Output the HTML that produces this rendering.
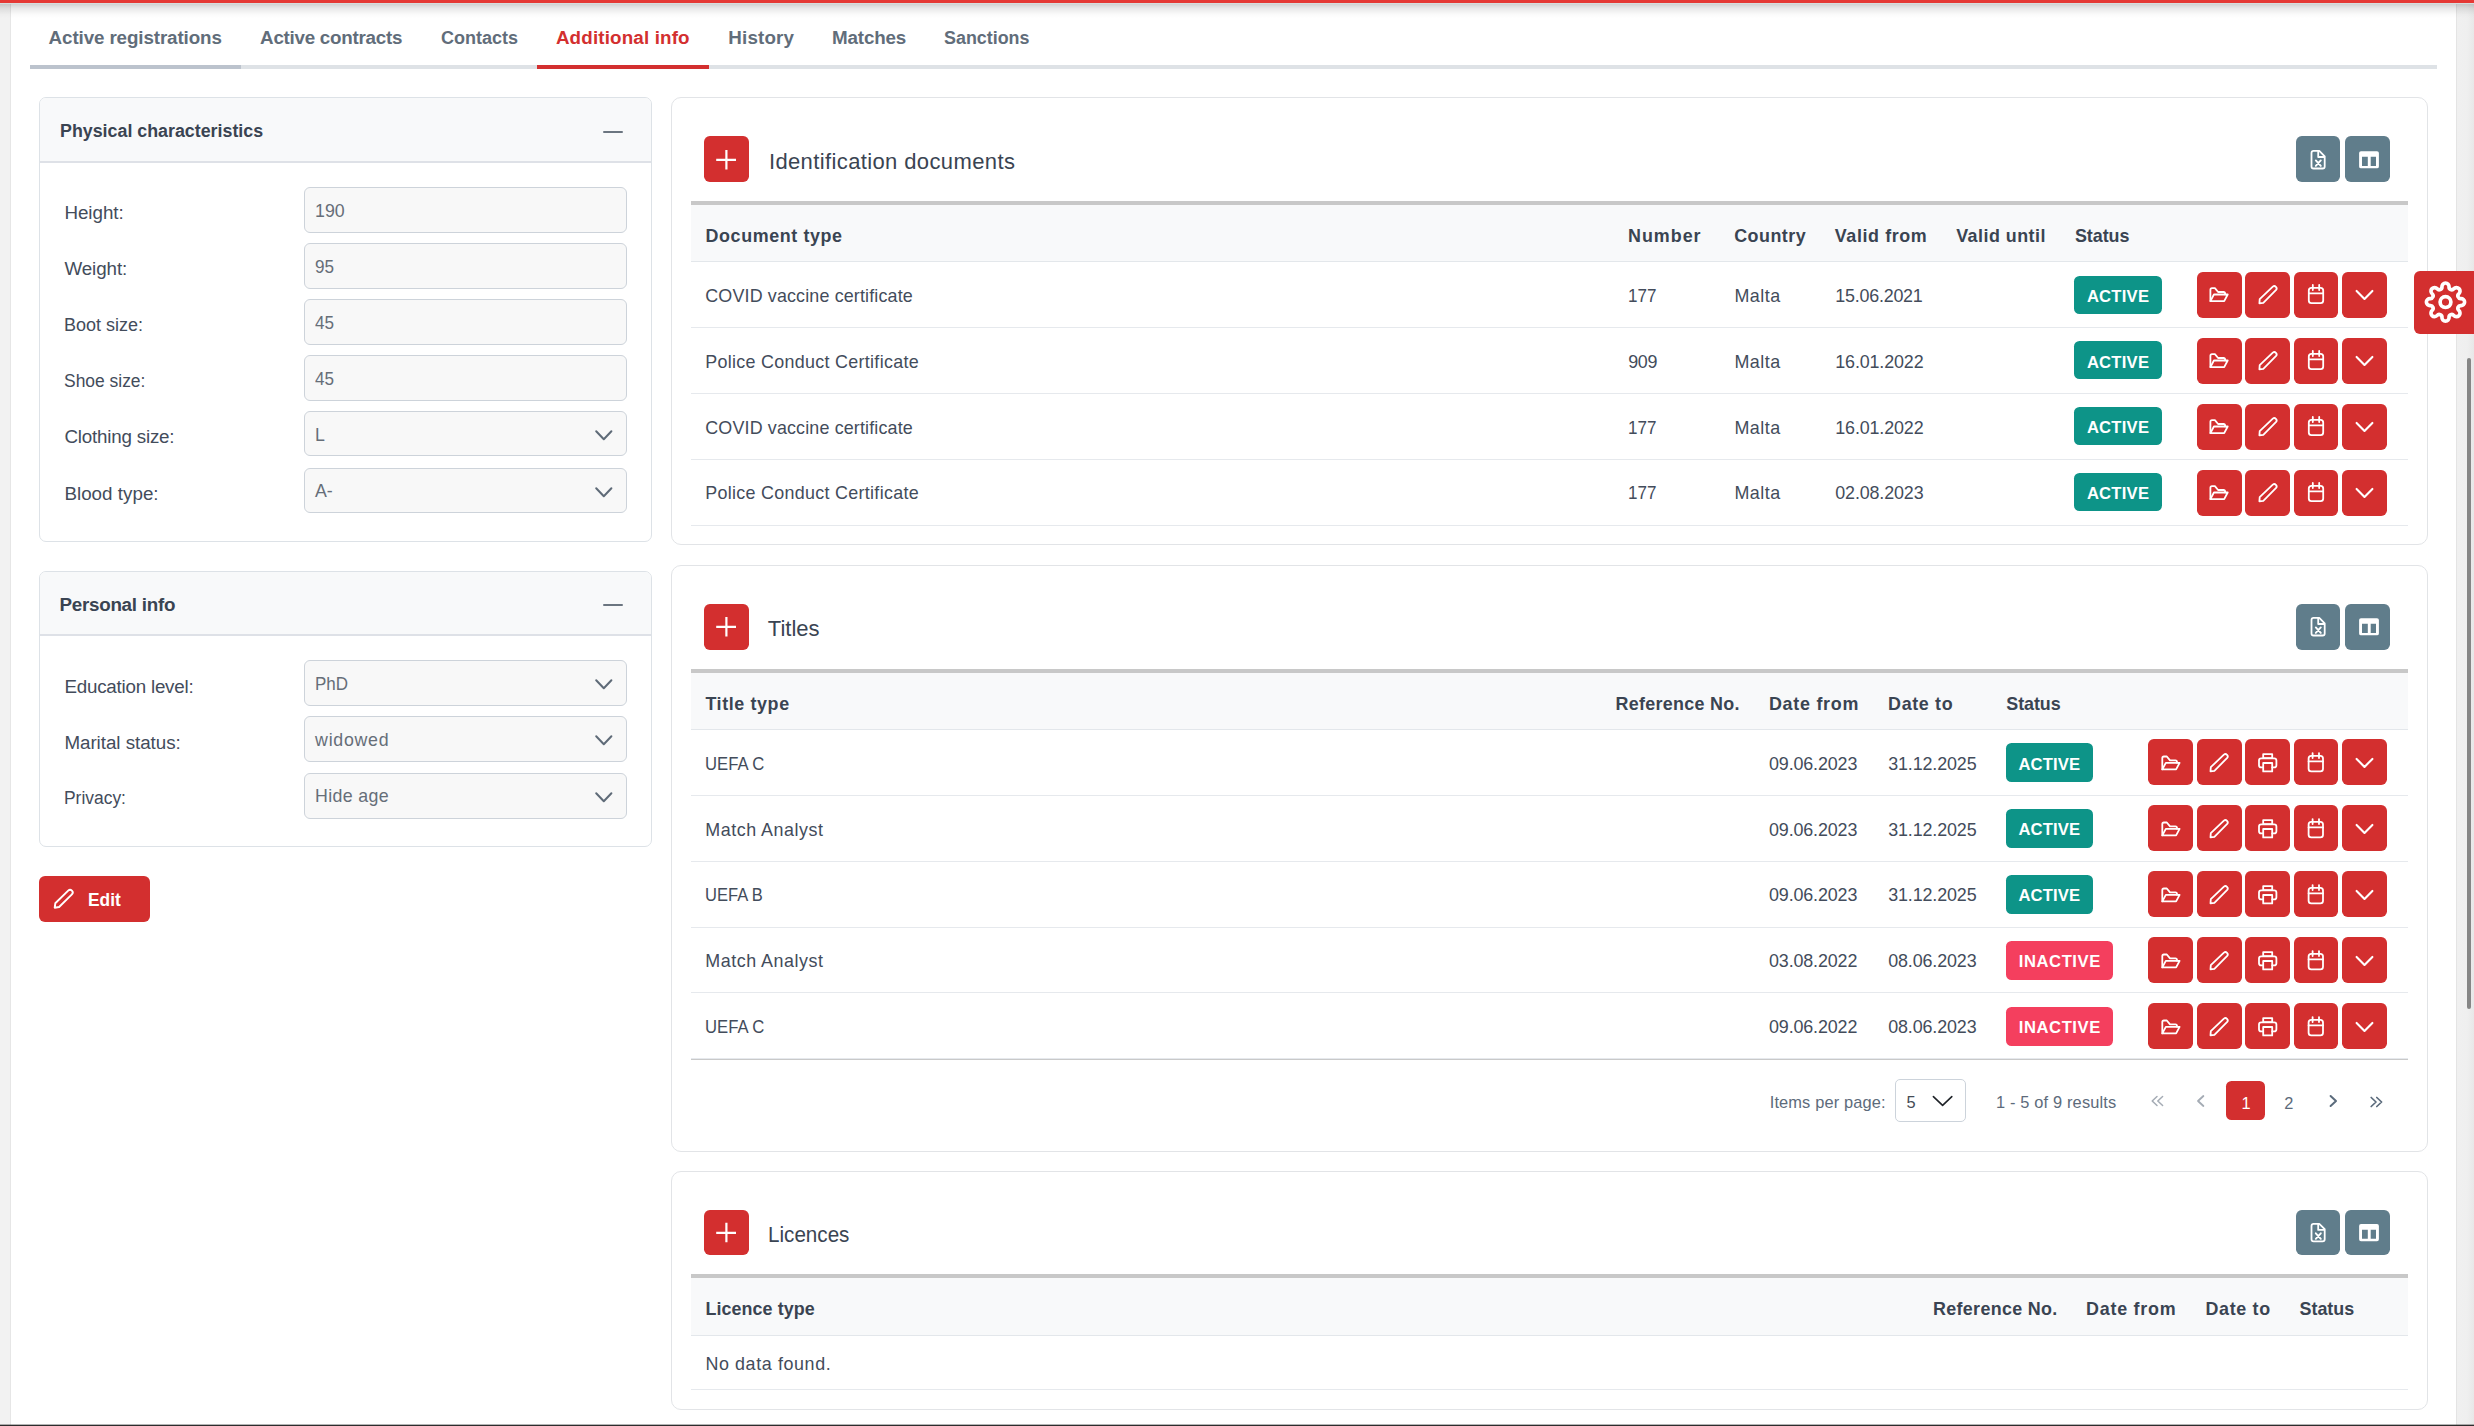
<!DOCTYPE html>
<html lang="en"><head><meta charset="utf-8"><title>Additional info</title>
<style>
html,body{margin:0;padding:0;background:#fff}
body{width:2474px;height:1426px;overflow:hidden;position:relative;font-family:"Liberation Sans",sans-serif}
#root{position:absolute;left:0;top:0;width:2474px;height:1426px;overflow:hidden;background:#fff}
.t{position:absolute;white-space:pre;margin:0;transform-origin:0 0}
.b{position:absolute;overflow:hidden}
</style></head><body><div id="root">
<div style="position:absolute;left:0px;top:0px;width:10px;height:1426px;background:#f2f2f2;border-right:1px solid #e6e6e6"></div>
<div style="position:absolute;left:2456px;top:0px;width:18px;height:1426px;background:linear-gradient(90deg,#e4e4e4 0,#e4e4e4 1px,#f0f0f0 1px,#efefef 11px,#e8e8e8 18px)"></div>
<div style="position:absolute;left:2467px;top:358px;width:4px;height:651px;background:#868686;border-radius:2px"></div>
<div style="position:absolute;left:0px;top:3px;width:2474px;height:15px;background:linear-gradient(180deg,rgba(0,0,0,.20) 0,rgba(0,0,0,.09) 35%,rgba(0,0,0,.02) 75%,rgba(0,0,0,0) 100%)"></div>
<div style="position:absolute;left:0px;top:0px;width:2474px;height:3px;background:#e53935"></div>
<div style="position:absolute;left:0px;top:3px;width:2474px;height:1px;background:#d6dede"></div>
<div style="position:absolute;left:0px;top:1424px;width:2474px;height:1px;background:rgba(40,40,40,.35)"></div>
<div style="position:absolute;left:0px;top:1425px;width:2474px;height:1px;background:#2d2d2d"></div>
<div style="position:absolute;left:30px;top:65px;width:2407px;height:4px;background:#dee2e6"></div>
<div style="position:absolute;left:30px;top:65px;width:211px;height:4px;background:#bcc3cd"></div>
<div style="position:absolute;left:537px;top:65px;width:172px;height:4px;background:#d32f2f"></div>
<span class="t " style="left:48.6px;top:26.2px;font-size:18.8px;line-height:23px;color:#616d7a;font-weight:700;letter-spacing:-0.11px;">Active registrations</span>
<span class="t " style="left:260.1px;top:26.2px;font-size:18.8px;line-height:23px;color:#616d7a;font-weight:700;letter-spacing:-0.26px;">Active contracts</span>
<span class="t " style="left:440.6px;top:26.2px;font-size:18.8px;line-height:23px;color:#616d7a;font-weight:700;transform:scaleX(0.9594);">Contacts</span>
<span class="t " style="left:555.9px;top:26.2px;font-size:18.8px;line-height:23px;color:#d32f2f;font-weight:700;letter-spacing:0.16px;">Additional info</span>
<span class="t " style="left:728.3px;top:26.2px;font-size:18.8px;line-height:23px;color:#616d7a;font-weight:700;letter-spacing:0.16px;">History</span>
<span class="t " style="left:832.0px;top:26.2px;font-size:18.8px;line-height:23px;color:#616d7a;font-weight:700;letter-spacing:-0.15px;">Matches</span>
<span class="t " style="left:944.4px;top:26.2px;font-size:18.8px;line-height:23px;color:#616d7a;font-weight:700;transform:scaleX(0.9526);">Sanctions</span>
<div style="position:absolute;left:39px;top:97px;width:613px;height:444.5px;border:1px solid #dde2e7;border-radius:7px;box-sizing:border-box;background:#fff"></div>
<div style="position:absolute;left:40px;top:98px;width:611px;height:63px;background:#f8f9fa;border-bottom:2px solid #dee1e7;border-radius:6px 6px 0 0"></div>
<span class="t " style="left:59.5px;top:118.6px;font-size:18.8px;line-height:23px;color:#3a4452;font-weight:700;transform:scaleX(0.9490);">Physical characteristics</span>
<div style="position:absolute;left:603px;top:131px;width:20px;height:2px;background:#6b7580;border-radius:1px"></div>
<span class="t " style="left:64.4px;top:200.8px;font-size:18.8px;line-height:23px;color:#434c5b;letter-spacing:-0.02px;">Height:</span>
<div style="position:absolute;left:304px;top:187.3px;width:323px;height:45.4px;box-sizing:border-box;border:1px solid #cdd3da;border-radius:6px;background:#f8f8f8"></div>
<span class="t " style="left:315.0px;top:201.0px;font-size:17.8px;line-height:21px;color:#666e78;letter-spacing:-0.01px;">190</span>
<span class="t " style="left:64.4px;top:256.8px;font-size:18.8px;line-height:23px;color:#434c5b;letter-spacing:-0.08px;">Weight:</span>
<div style="position:absolute;left:304px;top:243.3px;width:323px;height:45.4px;box-sizing:border-box;border:1px solid #cdd3da;border-radius:6px;background:#f8f8f8"></div>
<span class="t " style="left:315.0px;top:257.0px;font-size:17.8px;line-height:21px;color:#666e78;transform:scaleX(0.9616);">95</span>
<span class="t " style="left:64.4px;top:312.8px;font-size:18.8px;line-height:23px;color:#434c5b;transform:scaleX(0.9584);">Boot size:</span>
<div style="position:absolute;left:304px;top:299.3px;width:323px;height:45.4px;box-sizing:border-box;border:1px solid #cdd3da;border-radius:6px;background:#f8f8f8"></div>
<span class="t " style="left:315.0px;top:313.0px;font-size:17.8px;line-height:21px;color:#666e78;transform:scaleX(0.9616);">45</span>
<span class="t " style="left:64.4px;top:368.8px;font-size:18.8px;line-height:23px;color:#434c5b;transform:scaleX(0.9283);">Shoe size:</span>
<div style="position:absolute;left:304px;top:355.3px;width:323px;height:45.4px;box-sizing:border-box;border:1px solid #cdd3da;border-radius:6px;background:#f8f8f8"></div>
<span class="t " style="left:315.0px;top:369.0px;font-size:17.8px;line-height:21px;color:#666e78;transform:scaleX(0.9616);">45</span>
<span class="t " style="left:64.4px;top:424.5px;font-size:18.8px;line-height:23px;color:#434c5b;letter-spacing:-0.20px;">Clothing size:</span>
<div style="position:absolute;left:304px;top:411px;width:323px;height:45.4px;box-sizing:border-box;border:1px solid #cdd3da;border-radius:6px;background:#f8f8f8"></div>
<span class="t " style="left:315.0px;top:424.7px;font-size:17.8px;line-height:21px;color:#666e78;">L</span>
<svg style="position:absolute;left:592px;top:426.0px" width="24" height="18" viewBox="0 0 24 18" fill="none" stroke="#5f6b78" stroke-width="2" stroke-linecap="round" stroke-linejoin="round"><path d="M4.2 5.2l7.6 8 7.6-8"/></svg>
<span class="t " style="left:64.4px;top:481.5px;font-size:18.8px;line-height:23px;color:#434c5b;letter-spacing:0.02px;">Blood type:</span>
<div style="position:absolute;left:304px;top:468.0px;width:323px;height:45.4px;box-sizing:border-box;border:1px solid #cdd3da;border-radius:6px;background:#f8f8f8"></div>
<span class="t " style="left:315.0px;top:481.0px;font-size:17.8px;line-height:21px;color:#666e78;letter-spacing:-0.10px;">A-</span>
<svg style="position:absolute;left:592px;top:483.0px" width="24" height="18" viewBox="0 0 24 18" fill="none" stroke="#5f6b78" stroke-width="2" stroke-linecap="round" stroke-linejoin="round"><path d="M4.2 5.2l7.6 8 7.6-8"/></svg>
<div style="position:absolute;left:39px;top:571px;width:613px;height:275.5px;border:1px solid #dde2e7;border-radius:7px;box-sizing:border-box;background:#fff"></div>
<div style="position:absolute;left:40px;top:572px;width:611px;height:62px;background:#f8f9fa;border-bottom:2px solid #dee1e7;border-radius:6px 6px 0 0"></div>
<span class="t " style="left:59.5px;top:592.6px;font-size:18.8px;line-height:23px;color:#3a4452;font-weight:700;letter-spacing:-0.26px;">Personal info</span>
<div style="position:absolute;left:603px;top:604px;width:20px;height:2px;background:#6b7580;border-radius:1px"></div>
<span class="t " style="left:64.4px;top:674.6px;font-size:18.8px;line-height:23px;color:#434c5b;letter-spacing:-0.22px;">Education level:</span>
<div style="position:absolute;left:304px;top:660.3px;width:323px;height:45.4px;box-sizing:border-box;border:1px solid #cdd3da;border-radius:6px;background:#f8f8f8"></div>
<span class="t " style="left:315.0px;top:674.3px;font-size:17.8px;line-height:21px;color:#666e78;transform:scaleX(0.9561);">PhD</span>
<svg style="position:absolute;left:592px;top:675.3px" width="24" height="18" viewBox="0 0 24 18" fill="none" stroke="#5f6b78" stroke-width="2" stroke-linecap="round" stroke-linejoin="round"><path d="M4.2 5.2l7.6 8 7.6-8"/></svg>
<span class="t " style="left:64.4px;top:730.6px;font-size:18.8px;line-height:23px;color:#434c5b;letter-spacing:-0.04px;">Marital status:</span>
<div style="position:absolute;left:304px;top:716.3px;width:323px;height:45.4px;box-sizing:border-box;border:1px solid #cdd3da;border-radius:6px;background:#f8f8f8"></div>
<span class="t " style="left:315.1px;top:730.4px;font-size:17.8px;line-height:21px;color:#666e78;letter-spacing:0.71px;">widowed</span>
<svg style="position:absolute;left:592px;top:731.3px" width="24" height="18" viewBox="0 0 24 18" fill="none" stroke="#5f6b78" stroke-width="2" stroke-linecap="round" stroke-linejoin="round"><path d="M4.2 5.2l7.6 8 7.6-8"/></svg>
<span class="t " style="left:64.4px;top:786.2px;font-size:18.8px;line-height:23px;color:#434c5b;transform:scaleX(0.9277);">Privacy:</span>
<div style="position:absolute;left:304px;top:773.2px;width:323px;height:45.4px;box-sizing:border-box;border:1px solid #cdd3da;border-radius:6px;background:#f8f8f8"></div>
<span class="t " style="left:315.0px;top:786.3px;font-size:17.8px;line-height:21px;color:#666e78;letter-spacing:0.36px;">Hide age</span>
<svg style="position:absolute;left:592px;top:788.2px" width="24" height="18" viewBox="0 0 24 18" fill="none" stroke="#5f6b78" stroke-width="2" stroke-linecap="round" stroke-linejoin="round"><path d="M4.2 5.2l7.6 8 7.6-8"/></svg>
<div class="b" style="left:39px;top:876px;width:111px;height:46px;background:#d32f2f;border-radius:6px"><svg width="40" height="46" viewBox="0 0 40 46" style="position:absolute;left:0;top:0" fill="none" stroke="#fff" stroke-width="1.9" stroke-linecap="round" stroke-linejoin="round"><path d="M16.3 27.3L29.2 14.6a2.6 2.6 0 0 1 3.7 3.7L20.1 31l-4.4 .7z"/></svg></div>
<span class="t " style="left:88.0px;top:888.4px;font-size:18.8px;line-height:23px;color:#fff;font-weight:700;transform:scaleX(0.9231);">Edit</span>
<div style="position:absolute;left:671px;top:97px;width:1757px;height:448px;border:1px solid #e2e4e7;border-radius:10px;box-sizing:border-box;background:#fff"></div>
<div class="b" style="left:704px;top:136px;width:45px;height:46px;background:#d32f2f;border-radius:5.8px"><svg width="45" height="46" viewBox="0 0 45 46" style="position:absolute;left:0;top:0;" fill="none" stroke="#fff" stroke-width="1.8" stroke-linecap="round" stroke-linejoin="round"><path d="M12.2 23.9h19.8M22.4 13.9v19.5" stroke-width="2.2" stroke-linecap="butt"/></svg></div>
<span class="t " style="left:768.9px;top:148.9px;font-size:22px;line-height:26px;color:#3a4452;letter-spacing:0.38px;">Identification documents</span>
<div class="b" style="left:2296px;top:136px;width:44px;height:46px;background:#607d8b;border-radius:5.8px"><svg width="45" height="46" viewBox="0 0 45 46" style="position:absolute;left:0;top:0;" fill="none" stroke="#fff" stroke-width="1.8" stroke-linecap="round" stroke-linejoin="round"><path d="M23.3 14.9h-5.7a2.1 2.1 0 0 0-2.1 2.1v13.4a2.1 2.1 0 0 0 2.1 2.1h9a2.1 2.1 0 0 0 2.1-2.1V20.3z" stroke-width="1.8"/><path d="M22.2 15.6v5.4h5.8" stroke-width="1.8"/><path d="M19.8 24.4l5 5.5M24.8 24.4l-5 5.5" stroke-width="1.9"/></svg></div>
<div class="b" style="left:2345px;top:136px;width:45px;height:46px;background:#607d8b;border-radius:5.8px"><svg width="45" height="46" viewBox="0 0 45 46" style="position:absolute;left:0;top:0;" fill="none" stroke="#fff" stroke-width="1.8" stroke-linecap="round" stroke-linejoin="round"><path fill="#fff" stroke="none" fill-rule="evenodd" d="M16 15.2h16a1.9 1.9 0 0 1 1.9 1.9v13.3a1.9 1.9 0 0 1-1.9 1.9H16a1.9 1.9 0 0 1-1.9-1.9V17.1a1.9 1.9 0 0 1 1.9-1.9zM17 20.8v9.1h5.8v-9.1zM25.7 20.8v9.1h5.3v-9.1z"/></svg></div>
<div style="position:absolute;left:691px;top:201px;width:1717px;height:4px;background:#c8c8c8"></div>
<div style="position:absolute;left:691px;top:205px;width:1717px;height:56px;background:#f8f9fa;border-bottom:1px solid #e3e7eb"></div>
<span class="t " style="left:705.5px;top:225.7px;font-size:17.9px;line-height:21px;color:#3a4452;font-weight:700;letter-spacing:0.61px;">Document type</span>
<span class="t " style="left:1628.0px;top:225.7px;font-size:17.9px;line-height:21px;color:#3a4452;font-weight:700;letter-spacing:0.99px;">Number</span>
<span class="t " style="left:1734.2px;top:225.7px;font-size:17.9px;line-height:21px;color:#3a4452;font-weight:700;letter-spacing:0.48px;">Country</span>
<span class="t " style="left:1834.8px;top:225.7px;font-size:17.9px;line-height:21px;color:#3a4452;font-weight:700;letter-spacing:0.61px;">Valid from</span>
<span class="t " style="left:1956.2px;top:225.7px;font-size:17.9px;line-height:21px;color:#3a4452;font-weight:700;letter-spacing:0.47px;">Valid until</span>
<span class="t " style="left:2074.9px;top:225.7px;font-size:17.9px;line-height:21px;color:#3a4452;font-weight:700;letter-spacing:-0.02px;">Status</span>
<div style="position:absolute;left:691px;top:327px;width:1717px;height:1px;background:#e6e9ed"></div>
<span class="t " style="left:705.3px;top:285.7px;font-size:17.9px;line-height:21px;color:#434c5b;letter-spacing:0.15px;">COVID vaccine certificate</span>
<span class="t " style="left:1628.3px;top:285.7px;font-size:17.9px;line-height:21px;color:#434c5b;transform:scaleX(0.9534);">177</span>
<span class="t " style="left:1734.4px;top:285.7px;font-size:17.9px;line-height:21px;color:#434c5b;letter-spacing:0.51px;">Malta</span>
<span class="t " style="left:1835.3px;top:285.7px;font-size:17.9px;line-height:21px;color:#434c5b;letter-spacing:-0.23px;">15.06.2021</span>
<div style="position:absolute;left:2074px;top:276px;width:88px;height:38px;background:#0d9488;border-radius:5.5px"></div>
<span class="t " style="left:2086.9px;top:286.6px;font-size:16.6px;line-height:20px;color:#fff;font-weight:700;letter-spacing:0.25px;">ACTIVE</span>
<div class="b" style="left:2197px;top:272px;width:45px;height:46px;background:#d32f2f;border-radius:5.8px"><svg width="45" height="46" viewBox="0 0 45 46" style="position:absolute;left:0;top:0;" fill="none" stroke="#fff" stroke-width="1.8" stroke-linecap="round" stroke-linejoin="round"><path d="M13.4 29V17.8a1.6 1.6 0 0 1 1.6-1.6h2.9l3.2 3.8h5.4a1.6 1.6 0 0 1 1.6 1.6v.8"/><path d="M16.9 22.5h13.8l-3.5 6.6H13.4z"/></svg></div>
<div class="b" style="left:2245px;top:272px;width:45px;height:46px;background:#d32f2f;border-radius:5.8px"><svg width="45" height="46" viewBox="0 0 45 46" style="position:absolute;left:0;top:0;" fill="none" stroke="#fff" stroke-width="1.8" stroke-linecap="round" stroke-linejoin="round"><path d="M14.7 27.2L27.8 14.6a2.35 2.35 0 0 1 3.3 3.3L18.3 30.8l-3.9.5z"/></svg></div>
<div class="b" style="left:2294px;top:272px;width:44px;height:46px;background:#d32f2f;border-radius:5.8px"><svg width="45" height="46" viewBox="0 0 45 46" style="position:absolute;left:0;top:0;" fill="none" stroke="#fff" stroke-width="1.8" stroke-linecap="round" stroke-linejoin="round"><rect x="14.8" y="15.8" width="14.4" height="15.4" rx="2.6"/><path d="M14.8 21.3h14.4M18.8 13v5M25.2 13v5"/></svg></div>
<div class="b" style="left:2342px;top:272px;width:45px;height:46px;background:#d32f2f;border-radius:5.8px"><svg width="45" height="46" viewBox="0 0 45 46" style="position:absolute;left:0;top:0;" fill="none" stroke="#fff" stroke-width="1.8" stroke-linecap="round" stroke-linejoin="round"><path d="M14.6 18.9l7.9 8 7.9-8" stroke-width="2.1"/></svg></div>
<div style="position:absolute;left:691px;top:393px;width:1717px;height:1px;background:#e6e9ed"></div>
<span class="t " style="left:705.3px;top:351.6px;font-size:17.9px;line-height:21px;color:#434c5b;letter-spacing:0.30px;">Police Conduct Certificate</span>
<span class="t " style="left:1628.3px;top:351.6px;font-size:17.9px;line-height:21px;color:#434c5b;letter-spacing:-0.40px;">909</span>
<span class="t " style="left:1734.4px;top:351.6px;font-size:17.9px;line-height:21px;color:#434c5b;letter-spacing:0.51px;">Malta</span>
<span class="t " style="left:1835.3px;top:351.6px;font-size:17.9px;line-height:21px;color:#434c5b;letter-spacing:-0.14px;">16.01.2022</span>
<div style="position:absolute;left:2074px;top:341px;width:88px;height:38px;background:#0d9488;border-radius:5.5px"></div>
<span class="t " style="left:2086.9px;top:352.5px;font-size:16.6px;line-height:20px;color:#fff;font-weight:700;letter-spacing:0.25px;">ACTIVE</span>
<div class="b" style="left:2197px;top:338px;width:45px;height:46px;background:#d32f2f;border-radius:5.8px"><svg width="45" height="46" viewBox="0 0 45 46" style="position:absolute;left:0;top:0;" fill="none" stroke="#fff" stroke-width="1.8" stroke-linecap="round" stroke-linejoin="round"><path d="M13.4 29V17.8a1.6 1.6 0 0 1 1.6-1.6h2.9l3.2 3.8h5.4a1.6 1.6 0 0 1 1.6 1.6v.8"/><path d="M16.9 22.5h13.8l-3.5 6.6H13.4z"/></svg></div>
<div class="b" style="left:2245px;top:338px;width:45px;height:46px;background:#d32f2f;border-radius:5.8px"><svg width="45" height="46" viewBox="0 0 45 46" style="position:absolute;left:0;top:0;" fill="none" stroke="#fff" stroke-width="1.8" stroke-linecap="round" stroke-linejoin="round"><path d="M14.7 27.2L27.8 14.6a2.35 2.35 0 0 1 3.3 3.3L18.3 30.8l-3.9.5z"/></svg></div>
<div class="b" style="left:2294px;top:338px;width:44px;height:46px;background:#d32f2f;border-radius:5.8px"><svg width="45" height="46" viewBox="0 0 45 46" style="position:absolute;left:0;top:0;" fill="none" stroke="#fff" stroke-width="1.8" stroke-linecap="round" stroke-linejoin="round"><rect x="14.8" y="15.8" width="14.4" height="15.4" rx="2.6"/><path d="M14.8 21.3h14.4M18.8 13v5M25.2 13v5"/></svg></div>
<div class="b" style="left:2342px;top:338px;width:45px;height:46px;background:#d32f2f;border-radius:5.8px"><svg width="45" height="46" viewBox="0 0 45 46" style="position:absolute;left:0;top:0;" fill="none" stroke="#fff" stroke-width="1.8" stroke-linecap="round" stroke-linejoin="round"><path d="M14.6 18.9l7.9 8 7.9-8" stroke-width="2.1"/></svg></div>
<div style="position:absolute;left:691px;top:459px;width:1717px;height:1px;background:#e6e9ed"></div>
<span class="t " style="left:705.3px;top:417.5px;font-size:17.9px;line-height:21px;color:#434c5b;letter-spacing:0.15px;">COVID vaccine certificate</span>
<span class="t " style="left:1628.3px;top:417.5px;font-size:17.9px;line-height:21px;color:#434c5b;transform:scaleX(0.9534);">177</span>
<span class="t " style="left:1734.4px;top:417.5px;font-size:17.9px;line-height:21px;color:#434c5b;letter-spacing:0.51px;">Malta</span>
<span class="t " style="left:1835.3px;top:417.5px;font-size:17.9px;line-height:21px;color:#434c5b;letter-spacing:-0.14px;">16.01.2022</span>
<div style="position:absolute;left:2074px;top:407px;width:88px;height:38px;background:#0d9488;border-radius:5.5px"></div>
<span class="t " style="left:2086.9px;top:418.4px;font-size:16.6px;line-height:20px;color:#fff;font-weight:700;letter-spacing:0.25px;">ACTIVE</span>
<div class="b" style="left:2197px;top:404px;width:45px;height:46px;background:#d32f2f;border-radius:5.8px"><svg width="45" height="46" viewBox="0 0 45 46" style="position:absolute;left:0;top:0;" fill="none" stroke="#fff" stroke-width="1.8" stroke-linecap="round" stroke-linejoin="round"><path d="M13.4 29V17.8a1.6 1.6 0 0 1 1.6-1.6h2.9l3.2 3.8h5.4a1.6 1.6 0 0 1 1.6 1.6v.8"/><path d="M16.9 22.5h13.8l-3.5 6.6H13.4z"/></svg></div>
<div class="b" style="left:2245px;top:404px;width:45px;height:46px;background:#d32f2f;border-radius:5.8px"><svg width="45" height="46" viewBox="0 0 45 46" style="position:absolute;left:0;top:0;" fill="none" stroke="#fff" stroke-width="1.8" stroke-linecap="round" stroke-linejoin="round"><path d="M14.7 27.2L27.8 14.6a2.35 2.35 0 0 1 3.3 3.3L18.3 30.8l-3.9.5z"/></svg></div>
<div class="b" style="left:2294px;top:404px;width:44px;height:46px;background:#d32f2f;border-radius:5.8px"><svg width="45" height="46" viewBox="0 0 45 46" style="position:absolute;left:0;top:0;" fill="none" stroke="#fff" stroke-width="1.8" stroke-linecap="round" stroke-linejoin="round"><rect x="14.8" y="15.8" width="14.4" height="15.4" rx="2.6"/><path d="M14.8 21.3h14.4M18.8 13v5M25.2 13v5"/></svg></div>
<div class="b" style="left:2342px;top:404px;width:45px;height:46px;background:#d32f2f;border-radius:5.8px"><svg width="45" height="46" viewBox="0 0 45 46" style="position:absolute;left:0;top:0;" fill="none" stroke="#fff" stroke-width="1.8" stroke-linecap="round" stroke-linejoin="round"><path d="M14.6 18.9l7.9 8 7.9-8" stroke-width="2.1"/></svg></div>
<div style="position:absolute;left:691px;top:525px;width:1717px;height:1px;background:#e6e9ed"></div>
<span class="t " style="left:705.3px;top:483.4px;font-size:17.9px;line-height:21px;color:#434c5b;letter-spacing:0.30px;">Police Conduct Certificate</span>
<span class="t " style="left:1628.3px;top:483.4px;font-size:17.9px;line-height:21px;color:#434c5b;transform:scaleX(0.9534);">177</span>
<span class="t " style="left:1734.4px;top:483.4px;font-size:17.9px;line-height:21px;color:#434c5b;letter-spacing:0.51px;">Malta</span>
<span class="t " style="left:1835.3px;top:483.4px;font-size:17.9px;line-height:21px;color:#434c5b;letter-spacing:-0.14px;">02.08.2023</span>
<div style="position:absolute;left:2074px;top:473px;width:88px;height:38px;background:#0d9488;border-radius:5.5px"></div>
<span class="t " style="left:2086.9px;top:484.3px;font-size:16.6px;line-height:20px;color:#fff;font-weight:700;letter-spacing:0.25px;">ACTIVE</span>
<div class="b" style="left:2197px;top:470px;width:45px;height:46px;background:#d32f2f;border-radius:5.8px"><svg width="45" height="46" viewBox="0 0 45 46" style="position:absolute;left:0;top:0;" fill="none" stroke="#fff" stroke-width="1.8" stroke-linecap="round" stroke-linejoin="round"><path d="M13.4 29V17.8a1.6 1.6 0 0 1 1.6-1.6h2.9l3.2 3.8h5.4a1.6 1.6 0 0 1 1.6 1.6v.8"/><path d="M16.9 22.5h13.8l-3.5 6.6H13.4z"/></svg></div>
<div class="b" style="left:2245px;top:470px;width:45px;height:46px;background:#d32f2f;border-radius:5.8px"><svg width="45" height="46" viewBox="0 0 45 46" style="position:absolute;left:0;top:0;" fill="none" stroke="#fff" stroke-width="1.8" stroke-linecap="round" stroke-linejoin="round"><path d="M14.7 27.2L27.8 14.6a2.35 2.35 0 0 1 3.3 3.3L18.3 30.8l-3.9.5z"/></svg></div>
<div class="b" style="left:2294px;top:470px;width:44px;height:46px;background:#d32f2f;border-radius:5.8px"><svg width="45" height="46" viewBox="0 0 45 46" style="position:absolute;left:0;top:0;" fill="none" stroke="#fff" stroke-width="1.8" stroke-linecap="round" stroke-linejoin="round"><rect x="14.8" y="15.8" width="14.4" height="15.4" rx="2.6"/><path d="M14.8 21.3h14.4M18.8 13v5M25.2 13v5"/></svg></div>
<div class="b" style="left:2342px;top:470px;width:45px;height:46px;background:#d32f2f;border-radius:5.8px"><svg width="45" height="46" viewBox="0 0 45 46" style="position:absolute;left:0;top:0;" fill="none" stroke="#fff" stroke-width="1.8" stroke-linecap="round" stroke-linejoin="round"><path d="M14.6 18.9l7.9 8 7.9-8" stroke-width="2.1"/></svg></div>
<div style="position:absolute;left:671px;top:565px;width:1757px;height:586.5px;border:1px solid #e2e4e7;border-radius:10px;box-sizing:border-box;background:#fff"></div>
<div class="b" style="left:704px;top:604px;width:45px;height:46px;background:#d32f2f;border-radius:5.8px"><svg width="45" height="46" viewBox="0 0 45 46" style="position:absolute;left:0;top:0;transform:translate(0px,-1px);" fill="none" stroke="#fff" stroke-width="1.8" stroke-linecap="round" stroke-linejoin="round"><path d="M12.2 23.9h19.8M22.4 13.9v19.5" stroke-width="2.2" stroke-linecap="butt"/></svg></div>
<span class="t " style="left:767.8px;top:616.0px;font-size:22px;line-height:26px;color:#3a4452;">Titles</span>
<div class="b" style="left:2296px;top:604px;width:44px;height:46px;background:#607d8b;border-radius:5.8px"><svg width="45" height="46" viewBox="0 0 45 46" style="position:absolute;left:0;top:0;transform:translate(0px,-1px);" fill="none" stroke="#fff" stroke-width="1.8" stroke-linecap="round" stroke-linejoin="round"><path d="M23.3 14.9h-5.7a2.1 2.1 0 0 0-2.1 2.1v13.4a2.1 2.1 0 0 0 2.1 2.1h9a2.1 2.1 0 0 0 2.1-2.1V20.3z" stroke-width="1.8"/><path d="M22.2 15.6v5.4h5.8" stroke-width="1.8"/><path d="M19.8 24.4l5 5.5M24.8 24.4l-5 5.5" stroke-width="1.9"/></svg></div>
<div class="b" style="left:2345px;top:604px;width:45px;height:46px;background:#607d8b;border-radius:5.8px"><svg width="45" height="46" viewBox="0 0 45 46" style="position:absolute;left:0;top:0;transform:translate(0px,-1px);" fill="none" stroke="#fff" stroke-width="1.8" stroke-linecap="round" stroke-linejoin="round"><path fill="#fff" stroke="none" fill-rule="evenodd" d="M16 15.2h16a1.9 1.9 0 0 1 1.9 1.9v13.3a1.9 1.9 0 0 1-1.9 1.9H16a1.9 1.9 0 0 1-1.9-1.9V17.1a1.9 1.9 0 0 1 1.9-1.9zM17 20.8v9.1h5.8v-9.1zM25.7 20.8v9.1h5.3v-9.1z"/></svg></div>
<div style="position:absolute;left:691px;top:669px;width:1717px;height:4px;background:#c8c8c8"></div>
<div style="position:absolute;left:691px;top:673px;width:1717px;height:56px;background:#f8f9fa;border-bottom:1px solid #e3e7eb"></div>
<span class="t " style="left:705.4px;top:694.0px;font-size:17.9px;line-height:21px;color:#3a4452;font-weight:700;letter-spacing:0.61px;">Title type</span>
<span class="t " style="left:1615.5px;top:694.0px;font-size:17.9px;line-height:21px;color:#3a4452;font-weight:700;letter-spacing:0.30px;">Reference No.</span>
<span class="t " style="left:1768.9px;top:694.0px;font-size:17.9px;line-height:21px;color:#3a4452;font-weight:700;letter-spacing:0.75px;">Date from</span>
<span class="t " style="left:1888.1px;top:694.0px;font-size:17.9px;line-height:21px;color:#3a4452;font-weight:700;letter-spacing:0.65px;">Date to</span>
<span class="t " style="left:2006.3px;top:694.0px;font-size:17.9px;line-height:21px;color:#3a4452;font-weight:700;letter-spacing:-0.06px;">Status</span>
<div style="position:absolute;left:691px;top:795px;width:1717px;height:1px;background:#e6e9ed"></div>
<span class="t " style="left:705.3px;top:753.6px;font-size:17.9px;line-height:21px;color:#434c5b;transform:scaleX(0.9319);">UEFA C</span>
<span class="t " style="left:1769.0px;top:753.6px;font-size:17.9px;line-height:21px;color:#434c5b;letter-spacing:-0.13px;">09.06.2023</span>
<span class="t " style="left:1888.2px;top:753.6px;font-size:17.9px;line-height:21px;color:#434c5b;letter-spacing:-0.12px;">31.12.2025</span>
<div style="position:absolute;left:2006px;top:743px;width:87px;height:39px;background:#0d9488;border-radius:5.5px"></div>
<span class="t " style="left:2018.4px;top:754.5px;font-size:16.6px;line-height:20px;color:#fff;font-weight:700;letter-spacing:0.15px;">ACTIVE</span>
<div class="b" style="left:2148px;top:739px;width:45px;height:46px;background:#d32f2f;border-radius:5.8px"><svg width="45" height="46" viewBox="0 0 45 46" style="position:absolute;left:0;top:0;transform:translate(0.9px,1.3px);" fill="none" stroke="#fff" stroke-width="1.8" stroke-linecap="round" stroke-linejoin="round"><path d="M13.4 29V17.8a1.6 1.6 0 0 1 1.6-1.6h2.9l3.2 3.8h5.4a1.6 1.6 0 0 1 1.6 1.6v.8"/><path d="M16.9 22.5h13.8l-3.5 6.6H13.4z"/></svg></div>
<div class="b" style="left:2197px;top:739px;width:45px;height:46px;background:#d32f2f;border-radius:5.8px"><svg width="45" height="46" viewBox="0 0 45 46" style="position:absolute;left:0;top:0;transform:translate(-0.9px,1px);" fill="none" stroke="#fff" stroke-width="1.8" stroke-linecap="round" stroke-linejoin="round"><path d="M14.7 27.2L27.8 14.6a2.35 2.35 0 0 1 3.3 3.3L18.3 30.8l-3.9.5z"/></svg></div>
<div class="b" style="left:2245px;top:739px;width:45px;height:46px;background:#d32f2f;border-radius:5.8px"><svg width="45" height="46" viewBox="0 0 45 46" style="position:absolute;left:0;top:0;" fill="none" stroke="#fff" stroke-width="1.8" stroke-linecap="round" stroke-linejoin="round"><rect x="18.2" y="15.1" width="9" height="4"/><path d="M18.2 28.4h-2a2.2 2.2 0 0 1-2.2-2.2v-4.7a2.2 2.2 0 0 1 2.2-2.2h13a2.2 2.2 0 0 1 2.2 2.2v4.7a2.2 2.2 0 0 1-2.2 2.2h-2"/><rect x="18.2" y="24" width="9" height="8.4"/></svg></div>
<div class="b" style="left:2294px;top:739px;width:44px;height:46px;background:#d32f2f;border-radius:5.8px"><svg width="45" height="46" viewBox="0 0 45 46" style="position:absolute;left:0;top:0;transform:translate(-0.2px,1.1px);" fill="none" stroke="#fff" stroke-width="1.8" stroke-linecap="round" stroke-linejoin="round"><rect x="14.8" y="15.8" width="14.4" height="15.4" rx="2.6"/><path d="M14.8 21.3h14.4M18.8 13v5M25.2 13v5"/></svg></div>
<div class="b" style="left:2342px;top:739px;width:45px;height:46px;background:#d32f2f;border-radius:5.8px"><svg width="45" height="46" viewBox="0 0 45 46" style="position:absolute;left:0;top:0;transform:translate(0px,1px);" fill="none" stroke="#fff" stroke-width="1.8" stroke-linecap="round" stroke-linejoin="round"><path d="M14.6 18.9l7.9 8 7.9-8" stroke-width="2.1"/></svg></div>
<div style="position:absolute;left:691px;top:861px;width:1717px;height:1px;background:#e6e9ed"></div>
<span class="t " style="left:705.3px;top:819.5px;font-size:17.9px;line-height:21px;color:#434c5b;letter-spacing:0.52px;">Match Analyst</span>
<span class="t " style="left:1769.0px;top:819.5px;font-size:17.9px;line-height:21px;color:#434c5b;letter-spacing:-0.13px;">09.06.2023</span>
<span class="t " style="left:1888.2px;top:819.5px;font-size:17.9px;line-height:21px;color:#434c5b;letter-spacing:-0.12px;">31.12.2025</span>
<div style="position:absolute;left:2006px;top:809px;width:87px;height:39px;background:#0d9488;border-radius:5.5px"></div>
<span class="t " style="left:2018.4px;top:820.4px;font-size:16.6px;line-height:20px;color:#fff;font-weight:700;letter-spacing:0.15px;">ACTIVE</span>
<div class="b" style="left:2148px;top:805px;width:45px;height:46px;background:#d32f2f;border-radius:5.8px"><svg width="45" height="46" viewBox="0 0 45 46" style="position:absolute;left:0;top:0;transform:translate(0.9px,1.3px);" fill="none" stroke="#fff" stroke-width="1.8" stroke-linecap="round" stroke-linejoin="round"><path d="M13.4 29V17.8a1.6 1.6 0 0 1 1.6-1.6h2.9l3.2 3.8h5.4a1.6 1.6 0 0 1 1.6 1.6v.8"/><path d="M16.9 22.5h13.8l-3.5 6.6H13.4z"/></svg></div>
<div class="b" style="left:2197px;top:805px;width:45px;height:46px;background:#d32f2f;border-radius:5.8px"><svg width="45" height="46" viewBox="0 0 45 46" style="position:absolute;left:0;top:0;transform:translate(-0.9px,1px);" fill="none" stroke="#fff" stroke-width="1.8" stroke-linecap="round" stroke-linejoin="round"><path d="M14.7 27.2L27.8 14.6a2.35 2.35 0 0 1 3.3 3.3L18.3 30.8l-3.9.5z"/></svg></div>
<div class="b" style="left:2245px;top:805px;width:45px;height:46px;background:#d32f2f;border-radius:5.8px"><svg width="45" height="46" viewBox="0 0 45 46" style="position:absolute;left:0;top:0;" fill="none" stroke="#fff" stroke-width="1.8" stroke-linecap="round" stroke-linejoin="round"><rect x="18.2" y="15.1" width="9" height="4"/><path d="M18.2 28.4h-2a2.2 2.2 0 0 1-2.2-2.2v-4.7a2.2 2.2 0 0 1 2.2-2.2h13a2.2 2.2 0 0 1 2.2 2.2v4.7a2.2 2.2 0 0 1-2.2 2.2h-2"/><rect x="18.2" y="24" width="9" height="8.4"/></svg></div>
<div class="b" style="left:2294px;top:805px;width:44px;height:46px;background:#d32f2f;border-radius:5.8px"><svg width="45" height="46" viewBox="0 0 45 46" style="position:absolute;left:0;top:0;transform:translate(-0.2px,1.1px);" fill="none" stroke="#fff" stroke-width="1.8" stroke-linecap="round" stroke-linejoin="round"><rect x="14.8" y="15.8" width="14.4" height="15.4" rx="2.6"/><path d="M14.8 21.3h14.4M18.8 13v5M25.2 13v5"/></svg></div>
<div class="b" style="left:2342px;top:805px;width:45px;height:46px;background:#d32f2f;border-radius:5.8px"><svg width="45" height="46" viewBox="0 0 45 46" style="position:absolute;left:0;top:0;transform:translate(0px,1px);" fill="none" stroke="#fff" stroke-width="1.8" stroke-linecap="round" stroke-linejoin="round"><path d="M14.6 18.9l7.9 8 7.9-8" stroke-width="2.1"/></svg></div>
<div style="position:absolute;left:691px;top:927px;width:1717px;height:1px;background:#e6e9ed"></div>
<span class="t " style="left:705.3px;top:885.4px;font-size:17.9px;line-height:21px;color:#434c5b;transform:scaleX(0.9242);">UEFA B</span>
<span class="t " style="left:1769.0px;top:885.4px;font-size:17.9px;line-height:21px;color:#434c5b;letter-spacing:-0.13px;">09.06.2023</span>
<span class="t " style="left:1888.2px;top:885.4px;font-size:17.9px;line-height:21px;color:#434c5b;letter-spacing:-0.12px;">31.12.2025</span>
<div style="position:absolute;left:2006px;top:875px;width:87px;height:39px;background:#0d9488;border-radius:5.5px"></div>
<span class="t " style="left:2018.4px;top:886.3px;font-size:16.6px;line-height:20px;color:#fff;font-weight:700;letter-spacing:0.15px;">ACTIVE</span>
<div class="b" style="left:2148px;top:871px;width:45px;height:46px;background:#d32f2f;border-radius:5.8px"><svg width="45" height="46" viewBox="0 0 45 46" style="position:absolute;left:0;top:0;transform:translate(0.9px,1.3px);" fill="none" stroke="#fff" stroke-width="1.8" stroke-linecap="round" stroke-linejoin="round"><path d="M13.4 29V17.8a1.6 1.6 0 0 1 1.6-1.6h2.9l3.2 3.8h5.4a1.6 1.6 0 0 1 1.6 1.6v.8"/><path d="M16.9 22.5h13.8l-3.5 6.6H13.4z"/></svg></div>
<div class="b" style="left:2197px;top:871px;width:45px;height:46px;background:#d32f2f;border-radius:5.8px"><svg width="45" height="46" viewBox="0 0 45 46" style="position:absolute;left:0;top:0;transform:translate(-0.9px,1px);" fill="none" stroke="#fff" stroke-width="1.8" stroke-linecap="round" stroke-linejoin="round"><path d="M14.7 27.2L27.8 14.6a2.35 2.35 0 0 1 3.3 3.3L18.3 30.8l-3.9.5z"/></svg></div>
<div class="b" style="left:2245px;top:871px;width:45px;height:46px;background:#d32f2f;border-radius:5.8px"><svg width="45" height="46" viewBox="0 0 45 46" style="position:absolute;left:0;top:0;" fill="none" stroke="#fff" stroke-width="1.8" stroke-linecap="round" stroke-linejoin="round"><rect x="18.2" y="15.1" width="9" height="4"/><path d="M18.2 28.4h-2a2.2 2.2 0 0 1-2.2-2.2v-4.7a2.2 2.2 0 0 1 2.2-2.2h13a2.2 2.2 0 0 1 2.2 2.2v4.7a2.2 2.2 0 0 1-2.2 2.2h-2"/><rect x="18.2" y="24" width="9" height="8.4"/></svg></div>
<div class="b" style="left:2294px;top:871px;width:44px;height:46px;background:#d32f2f;border-radius:5.8px"><svg width="45" height="46" viewBox="0 0 45 46" style="position:absolute;left:0;top:0;transform:translate(-0.2px,1.1px);" fill="none" stroke="#fff" stroke-width="1.8" stroke-linecap="round" stroke-linejoin="round"><rect x="14.8" y="15.8" width="14.4" height="15.4" rx="2.6"/><path d="M14.8 21.3h14.4M18.8 13v5M25.2 13v5"/></svg></div>
<div class="b" style="left:2342px;top:871px;width:45px;height:46px;background:#d32f2f;border-radius:5.8px"><svg width="45" height="46" viewBox="0 0 45 46" style="position:absolute;left:0;top:0;transform:translate(0px,1px);" fill="none" stroke="#fff" stroke-width="1.8" stroke-linecap="round" stroke-linejoin="round"><path d="M14.6 18.9l7.9 8 7.9-8" stroke-width="2.1"/></svg></div>
<div style="position:absolute;left:691px;top:992px;width:1717px;height:1px;background:#e6e9ed"></div>
<span class="t " style="left:705.3px;top:951.3px;font-size:17.9px;line-height:21px;color:#434c5b;letter-spacing:0.52px;">Match Analyst</span>
<span class="t " style="left:1769.0px;top:951.3px;font-size:17.9px;line-height:21px;color:#434c5b;letter-spacing:-0.13px;">03.08.2022</span>
<span class="t " style="left:1888.2px;top:951.3px;font-size:17.9px;line-height:21px;color:#434c5b;letter-spacing:-0.12px;">08.06.2023</span>
<div style="position:absolute;left:2006px;top:941px;width:107px;height:39px;background:#f43f5e;border-radius:5.5px"></div>
<span class="t " style="left:2018.8px;top:952.2px;font-size:16.6px;line-height:20px;color:#fff;font-weight:700;letter-spacing:0.57px;">INACTIVE</span>
<div class="b" style="left:2148px;top:937px;width:45px;height:46px;background:#d32f2f;border-radius:5.8px"><svg width="45" height="46" viewBox="0 0 45 46" style="position:absolute;left:0;top:0;transform:translate(0.9px,1.3px);" fill="none" stroke="#fff" stroke-width="1.8" stroke-linecap="round" stroke-linejoin="round"><path d="M13.4 29V17.8a1.6 1.6 0 0 1 1.6-1.6h2.9l3.2 3.8h5.4a1.6 1.6 0 0 1 1.6 1.6v.8"/><path d="M16.9 22.5h13.8l-3.5 6.6H13.4z"/></svg></div>
<div class="b" style="left:2197px;top:937px;width:45px;height:46px;background:#d32f2f;border-radius:5.8px"><svg width="45" height="46" viewBox="0 0 45 46" style="position:absolute;left:0;top:0;transform:translate(-0.9px,1px);" fill="none" stroke="#fff" stroke-width="1.8" stroke-linecap="round" stroke-linejoin="round"><path d="M14.7 27.2L27.8 14.6a2.35 2.35 0 0 1 3.3 3.3L18.3 30.8l-3.9.5z"/></svg></div>
<div class="b" style="left:2245px;top:937px;width:45px;height:46px;background:#d32f2f;border-radius:5.8px"><svg width="45" height="46" viewBox="0 0 45 46" style="position:absolute;left:0;top:0;" fill="none" stroke="#fff" stroke-width="1.8" stroke-linecap="round" stroke-linejoin="round"><rect x="18.2" y="15.1" width="9" height="4"/><path d="M18.2 28.4h-2a2.2 2.2 0 0 1-2.2-2.2v-4.7a2.2 2.2 0 0 1 2.2-2.2h13a2.2 2.2 0 0 1 2.2 2.2v4.7a2.2 2.2 0 0 1-2.2 2.2h-2"/><rect x="18.2" y="24" width="9" height="8.4"/></svg></div>
<div class="b" style="left:2294px;top:937px;width:44px;height:46px;background:#d32f2f;border-radius:5.8px"><svg width="45" height="46" viewBox="0 0 45 46" style="position:absolute;left:0;top:0;transform:translate(-0.2px,1.1px);" fill="none" stroke="#fff" stroke-width="1.8" stroke-linecap="round" stroke-linejoin="round"><rect x="14.8" y="15.8" width="14.4" height="15.4" rx="2.6"/><path d="M14.8 21.3h14.4M18.8 13v5M25.2 13v5"/></svg></div>
<div class="b" style="left:2342px;top:937px;width:45px;height:46px;background:#d32f2f;border-radius:5.8px"><svg width="45" height="46" viewBox="0 0 45 46" style="position:absolute;left:0;top:0;transform:translate(0px,1px);" fill="none" stroke="#fff" stroke-width="1.8" stroke-linecap="round" stroke-linejoin="round"><path d="M14.6 18.9l7.9 8 7.9-8" stroke-width="2.1"/></svg></div>
<div style="position:absolute;left:691px;top:1058px;width:1717px;height:1px;background:#e6e9ed"></div>
<div style="position:absolute;left:691px;top:1059px;width:1717px;height:1px;background:#c9c9c9"></div>
<span class="t " style="left:705.3px;top:1017.2px;font-size:17.9px;line-height:21px;color:#434c5b;transform:scaleX(0.9319);">UEFA C</span>
<span class="t " style="left:1769.0px;top:1017.2px;font-size:17.9px;line-height:21px;color:#434c5b;letter-spacing:-0.13px;">09.06.2022</span>
<span class="t " style="left:1888.2px;top:1017.2px;font-size:17.9px;line-height:21px;color:#434c5b;letter-spacing:-0.12px;">08.06.2023</span>
<div style="position:absolute;left:2006px;top:1007px;width:107px;height:39px;background:#f43f5e;border-radius:5.5px"></div>
<span class="t " style="left:2018.8px;top:1018.1px;font-size:16.6px;line-height:20px;color:#fff;font-weight:700;letter-spacing:0.57px;">INACTIVE</span>
<div class="b" style="left:2148px;top:1003px;width:45px;height:46px;background:#d32f2f;border-radius:5.8px"><svg width="45" height="46" viewBox="0 0 45 46" style="position:absolute;left:0;top:0;transform:translate(0.9px,1.3px);" fill="none" stroke="#fff" stroke-width="1.8" stroke-linecap="round" stroke-linejoin="round"><path d="M13.4 29V17.8a1.6 1.6 0 0 1 1.6-1.6h2.9l3.2 3.8h5.4a1.6 1.6 0 0 1 1.6 1.6v.8"/><path d="M16.9 22.5h13.8l-3.5 6.6H13.4z"/></svg></div>
<div class="b" style="left:2197px;top:1003px;width:45px;height:46px;background:#d32f2f;border-radius:5.8px"><svg width="45" height="46" viewBox="0 0 45 46" style="position:absolute;left:0;top:0;transform:translate(-0.9px,1px);" fill="none" stroke="#fff" stroke-width="1.8" stroke-linecap="round" stroke-linejoin="round"><path d="M14.7 27.2L27.8 14.6a2.35 2.35 0 0 1 3.3 3.3L18.3 30.8l-3.9.5z"/></svg></div>
<div class="b" style="left:2245px;top:1003px;width:45px;height:46px;background:#d32f2f;border-radius:5.8px"><svg width="45" height="46" viewBox="0 0 45 46" style="position:absolute;left:0;top:0;" fill="none" stroke="#fff" stroke-width="1.8" stroke-linecap="round" stroke-linejoin="round"><rect x="18.2" y="15.1" width="9" height="4"/><path d="M18.2 28.4h-2a2.2 2.2 0 0 1-2.2-2.2v-4.7a2.2 2.2 0 0 1 2.2-2.2h13a2.2 2.2 0 0 1 2.2 2.2v4.7a2.2 2.2 0 0 1-2.2 2.2h-2"/><rect x="18.2" y="24" width="9" height="8.4"/></svg></div>
<div class="b" style="left:2294px;top:1003px;width:44px;height:46px;background:#d32f2f;border-radius:5.8px"><svg width="45" height="46" viewBox="0 0 45 46" style="position:absolute;left:0;top:0;transform:translate(-0.2px,1.1px);" fill="none" stroke="#fff" stroke-width="1.8" stroke-linecap="round" stroke-linejoin="round"><rect x="14.8" y="15.8" width="14.4" height="15.4" rx="2.6"/><path d="M14.8 21.3h14.4M18.8 13v5M25.2 13v5"/></svg></div>
<div class="b" style="left:2342px;top:1003px;width:45px;height:46px;background:#d32f2f;border-radius:5.8px"><svg width="45" height="46" viewBox="0 0 45 46" style="position:absolute;left:0;top:0;transform:translate(0px,1px);" fill="none" stroke="#fff" stroke-width="1.8" stroke-linecap="round" stroke-linejoin="round"><path d="M14.6 18.9l7.9 8 7.9-8" stroke-width="2.1"/></svg></div>
<span class="t " style="left:1769.7px;top:1092.3px;font-size:16.4px;line-height:20px;color:#5d6b7b;letter-spacing:0.14px;">Items per page:</span>
<div style="position:absolute;left:1895px;top:1079px;width:71px;height:43px;box-sizing:border-box;border:1px solid #ccd3db;border-radius:5px;background:#fff"></div>
<span class="t " style="left:1906.4px;top:1092.3px;font-size:16.4px;line-height:20px;color:#444b55;">5</span>
<svg style="position:absolute;left:1930px;top:1092px" width="26" height="18" viewBox="0 0 26 18" fill="none" stroke="#1f2328" stroke-width="1.6" stroke-linecap="round" stroke-linejoin="round"><path d="M3.4 4.6l9.2 8.8 9.2-8.8"/></svg>
<span class="t " style="left:1996.0px;top:1092.3px;font-size:16.4px;line-height:20px;color:#5d6b7b;letter-spacing:0.16px;">1 - 5 of 9 results</span>
<svg style="position:absolute;left:2148px;top:1093px" width="20" height="16" viewBox="0 0 20 16" fill="none" stroke="#a4abb4" stroke-width="1.5" stroke-linecap="round" stroke-linejoin="round"><path d="M9 3.5L4.2 8 9 12.5M14.6 3.5L9.8 8l4.8 4.5"/></svg>
<svg style="position:absolute;left:2192px;top:1093px" width="20" height="16" viewBox="0 0 20 16" fill="none" stroke="#a4abb4" stroke-width="1.8" stroke-linecap="round" stroke-linejoin="round"><path d="M11.4 3L6 8l5.4 5"/></svg>
<div style="position:absolute;left:2226px;top:1081px;width:39px;height:39px;background:#d32f2f;border-radius:5.5px"></div>
<span class="t " style="left:2241.4px;top:1092.7px;font-size:16.4px;line-height:20px;color:#fff;">1</span>
<span class="t " style="left:2284.3px;top:1092.7px;font-size:16.4px;line-height:20px;color:#5d6b7b;">2</span>
<svg style="position:absolute;left:2324px;top:1093px" width="20" height="16" viewBox="0 0 20 16" fill="none" stroke="#5b6b7c" stroke-width="2" stroke-linecap="round" stroke-linejoin="round"><path d="M6.6 3L12 8l-5.4 5"/></svg>
<svg style="position:absolute;left:2366px;top:1094px" width="20" height="16" viewBox="0 0 20 16" fill="none" stroke="#5b6b7c" stroke-width="1.7" stroke-linecap="round" stroke-linejoin="round"><path d="M5.2 3.5L10 8l-4.8 4.5M10.8 3.5L15.6 8l-4.8 4.5"/></svg>
<div style="position:absolute;left:671px;top:1171px;width:1757px;height:239px;border:1px solid #e2e4e7;border-radius:10px;box-sizing:border-box;background:#fff"></div>
<div class="b" style="left:704px;top:1210px;width:45px;height:45px;background:#d32f2f;border-radius:5.8px"><svg width="45" height="46" viewBox="0 0 45 46" style="position:absolute;left:0;top:0;transform:translate(0px,-1.1px);" fill="none" stroke="#fff" stroke-width="1.8" stroke-linecap="round" stroke-linejoin="round"><path d="M12.2 23.9h19.8M22.4 13.9v19.5" stroke-width="2.2" stroke-linecap="butt"/></svg></div>
<span class="t " style="left:768.0px;top:1221.8px;font-size:22px;line-height:26px;color:#3a4452;transform:scaleX(0.9379);">Licences</span>
<div class="b" style="left:2296px;top:1210px;width:44px;height:45px;background:#607d8b;border-radius:5.8px"><svg width="45" height="46" viewBox="0 0 45 46" style="position:absolute;left:0;top:0;transform:translate(0px,-1.1px);" fill="none" stroke="#fff" stroke-width="1.8" stroke-linecap="round" stroke-linejoin="round"><path d="M23.3 14.9h-5.7a2.1 2.1 0 0 0-2.1 2.1v13.4a2.1 2.1 0 0 0 2.1 2.1h9a2.1 2.1 0 0 0 2.1-2.1V20.3z" stroke-width="1.8"/><path d="M22.2 15.6v5.4h5.8" stroke-width="1.8"/><path d="M19.8 24.4l5 5.5M24.8 24.4l-5 5.5" stroke-width="1.9"/></svg></div>
<div class="b" style="left:2345px;top:1210px;width:45px;height:45px;background:#607d8b;border-radius:5.8px"><svg width="45" height="46" viewBox="0 0 45 46" style="position:absolute;left:0;top:0;transform:translate(0px,-1.1px);" fill="none" stroke="#fff" stroke-width="1.8" stroke-linecap="round" stroke-linejoin="round"><path fill="#fff" stroke="none" fill-rule="evenodd" d="M16 15.2h16a1.9 1.9 0 0 1 1.9 1.9v13.3a1.9 1.9 0 0 1-1.9 1.9H16a1.9 1.9 0 0 1-1.9-1.9V17.1a1.9 1.9 0 0 1 1.9-1.9zM17 20.8v9.1h5.8v-9.1zM25.7 20.8v9.1h5.3v-9.1z"/></svg></div>
<div style="position:absolute;left:691px;top:1274px;width:1717px;height:4px;background:#c8c8c8"></div>
<div style="position:absolute;left:691px;top:1278px;width:1717px;height:57px;background:#f8f9fa;border-bottom:1px solid #e3e7eb"></div>
<span class="t " style="left:705.4px;top:1299.1px;font-size:17.9px;line-height:21px;color:#3a4452;font-weight:700;letter-spacing:0.08px;">Licence type</span>
<span class="t " style="left:1933.0px;top:1299.1px;font-size:17.9px;line-height:21px;color:#3a4452;font-weight:700;letter-spacing:0.33px;">Reference No.</span>
<span class="t " style="left:2086.1px;top:1299.1px;font-size:17.9px;line-height:21px;color:#3a4452;font-weight:700;letter-spacing:0.75px;">Date from</span>
<span class="t " style="left:2205.4px;top:1299.1px;font-size:17.9px;line-height:21px;color:#3a4452;font-weight:700;letter-spacing:0.69px;">Date to</span>
<span class="t " style="left:2299.5px;top:1299.1px;font-size:17.9px;line-height:21px;color:#3a4452;font-weight:700;">Status</span>
<span class="t " style="left:705.4px;top:1353.7px;font-size:17.9px;line-height:21px;color:#434c5b;letter-spacing:0.61px;">No data found.</span>
<div style="position:absolute;left:691px;top:1389px;width:1717px;height:1px;background:#e6e9ed"></div>
<div class="b" style="left:2414px;top:271px;width:60px;height:63px;background:#d32f2f;border-radius:6px 0 0 6px"><svg width="60" height="63" viewBox="0 0 60 63" style="position:absolute;left:0;top:0" fill="none" stroke="#fff" stroke-width="3.7" stroke-linejoin="round"><path d="M27.96 15.82A3.55 3.55 0 1 1 35.04 15.82A2.71 2.71 0 0 0 39.80 17.79A3.55 3.55 0 1 1 44.81 22.80A2.71 2.71 0 0 0 46.78 27.56A3.55 3.55 0 1 1 46.78 34.64A2.71 2.71 0 0 0 44.81 39.40A3.55 3.55 0 1 1 39.80 44.41A2.71 2.71 0 0 0 35.04 46.38A3.55 3.55 0 1 1 27.96 46.38A2.71 2.71 0 0 0 23.20 44.41A3.55 3.55 0 1 1 18.19 39.40A2.71 2.71 0 0 0 16.22 34.64A3.55 3.55 0 1 1 16.22 27.56A2.71 2.71 0 0 0 18.19 22.80A3.55 3.55 0 1 1 23.20 17.79A2.71 2.71 0 0 0 27.96 15.82Z"/><circle cx="31.5" cy="31.1" r="5.4"/></svg></div>
</div></body></html>
